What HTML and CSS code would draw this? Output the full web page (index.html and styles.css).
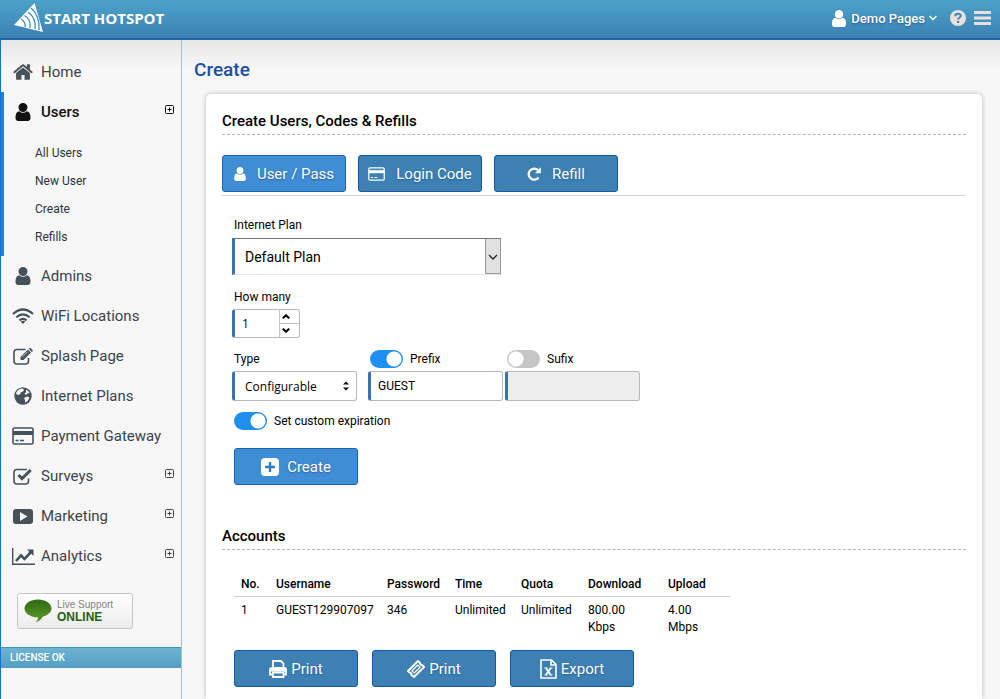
FILE: index.html
```html
<!DOCTYPE html>
<html lang="en">
<head>
    <meta charset="UTF-8">
    <meta name="viewport" content="width=device-width, initial-scale=1">
    <title>Start Hotspot - Create</title>
    <link rel="stylesheet" href="styles.css">
</head>
<body>

<!-- shared icons -->
<svg class="sprite" aria-hidden="true">
    <symbol id="i-user" viewBox="256 128 1280 1536"><path d="M1536 1399q0 109-62.500 187t-150.500 78h-854q-88 0-150.500-78t-62.500-187q0-85 8.500-160.500t31.500-152 58.500-131 94-89 134.500-34.500q131 128 313 128t313-128q76 0 134.500 34.500t94 89 58.500 131 31.500 152 8.500 160.500zm-256-887q0 159-112.500 271.500t-271.500 112.500-271.500-112.500-112.500-271.500 112.500-271.500 271.500-112.500 271.500 112.500 112.500 271.500z"/></symbol>
    <symbol id="i-plus" viewBox="0 0 9 9"><rect x=".5" y=".5" width="8" height="8" rx="1" fill="none" stroke="currentColor"/><path d="M2.500 4.500h4M4.500 2.500v4" stroke="currentColor"/></symbol>
    <symbol id="i-card" viewBox="0 0 22 18"><rect x="1" y="1" width="20" height="16" rx="1.500" fill="none" stroke="currentColor" stroke-width="1.600"/><path d="M1 4h20v4H1z"/><path d="M3.500 13.500h3M8 13.500h4" stroke="currentColor" stroke-width="1.500"/></symbol>
</svg>

<header class="topbar">
    <a class="logo" href="#">
        <svg width="30" height="30" viewBox="0 0 30 30">
            <path d="M20.500 0 29 29 0 22z" fill="#fff"/>
            <g fill="none" stroke="#3e8dbd" stroke-width="1.300">
                <path d="M7 16q5 3 4 8M10.500 12.500q7 4 5.500 12.500M14 9q8.500 6 7 17M17 5q9 8 8 22"/>
            </g>
        </svg>
        <span>START HOTSPOT</span>
    </a>
    <div class="top-right">
        <button class="account" type="button">
            <svg width="16" height="17" fill="currentColor"><use href="#i-user"/></svg>
            Demo Pages
            <svg width="8" height="6" viewBox="0 0 8 6" fill="none" stroke="currentColor" stroke-width="1.500"><path d="M.5 1 4 4.500 7.500 1"/></svg>
        </button>
        <button class="icon-btn" type="button" aria-label="Help">
            <svg width="16" height="16" viewBox="0 0 16 16"><circle cx="8" cy="8" r="8" fill="#e9dfdd"/><path d="M5.300 6.200C5.400 2.800 10.800 3 10.700 6c0 1.800-2.600 1.800-2.600 3.600" fill="none" stroke="#3d87b8" stroke-width="2"/><rect x="7" y="10.800" width="2.200" height="2.200" fill="#3d87b8"/></svg>
        </button>
        <button class="icon-btn" type="button" aria-label="Menu">
            <svg width="17" height="14" viewBox="0 0 17 14" fill="#e9dfdd"><path d="M0 0h17v3H0zM0 5.500h17v3H0zM0 11h17v3H0z"/></svg>
        </button>
    </div>
</header>

<div class="layout">
    <aside class="sidebar">
        <nav>
            <a class="item" href="#">
                <svg class="ico" width="20" height="20" viewBox="64 128 1664 1536"><path d="M1472 992v480q0 26-19 45t-45 19h-384v-384h-256v384h-384q-26 0-45-19t-19-45v-480q0-1 .5-3t.5-3l575-474 575 474q1 2 1 6zm223-69l-62 74q-8 9-21 11h-3q-13 0-21-7l-692-577-692 577q-12 8-24 7-13-2-21-11l-62-74q-8-10-7-23.500t11-21.500l719-599q32-26 76-26t76 26l244 204v-195q0-14 9-23t23-9h192q14 0 23 9t9 23v408l219 182q10 8 11 21.500t-7 23.500z"/></svg>
                <span>Home</span>
            </a>
            <div class="group">
                <a class="item active" href="#">
                    <svg class="ico" width="18" height="18"><use href="#i-user"/></svg>
                    <span>Users</span>
                    <svg class="expand" width="9" height="9"><use href="#i-plus"/></svg>
                </a>
                <div class="sub">
                    <a href="#">All Users</a>
                    <a href="#">New User</a>
                    <a href="#">Create</a>
                    <a href="#">Refills</a>
                </div>
            </div>
            <a class="item" href="#">
                <svg class="ico" width="18" height="18"><use href="#i-user"/></svg>
                <span>Admins</span>
            </a>
            <a class="item" href="#">
                <svg class="ico" width="22" height="16" viewBox="0 0 22 16"><g fill="none" stroke="currentColor" stroke-width="2.200"><path d="M1 6q10-9 20 0M4.300 9.300q6.700-6 13.400 0M7.500 12.300q3.500-3 7 0"/></g><path d="m11 16-2.200-2.300q2.200-1.700 4.400 0z"/></svg>
                <span>WiFi Locations</span>
            </a>
            <a class="item" href="#">
                <svg class="ico" width="20" height="17" viewBox="0 0 20 17"><path d="M12.500 1.500H4Q1 1.500 1 4.500v8.500q0 3 3 3h8.500q3 0 3-3v-3" fill="none" stroke="currentColor" stroke-width="1.600"/><path d="m7.500 9 7.500-7.500 3 3L10.500 12H7.500z"/><path d="m15.700.8.6-.6q.7-.5 1.400 0l1.800 1.800q.5.700 0 1.400l-.7.6z"/><path d="m9.500 8.800 5-5" stroke="#f7f7f7" stroke-width=".7"/></svg>
                <span>Splash Page</span>
            </a>
            <a class="item" href="#">
                <svg class="ico" width="18" height="18" viewBox="0 0 18 18"><circle cx="9" cy="9" r="8.700"/><path d="M6 1.700 9 1.500 10 3.500 8 5 6.500 5.500 6.500 7 4.500 8 3 7.500 1.800 6.500Q3 3.500 6 1.700zM12 2.500q2.500 1 3.800 3.500l-2.300.5L12 8l-1.500-1.300L12 5zM10 11l3-1.500 2.500 1q-1 3.500-4.500 5.300l.2-2z" fill="#f7f7f7"/></svg>
                <span>Internet Plans</span>
            </a>
            <a class="item" href="#">
                <svg class="ico" width="22" height="18"><use href="#i-card"/></svg>
                <span>Payment Gateway</span>
            </a>
            <a class="item" href="#">
                <svg class="ico" width="20" height="17" viewBox="0 0 20 17"><path d="M14 1.500H4Q1 1.500 1 4.500v8.500q0 3 3 3h8.500q3 0 3-3v-2.500" fill="none" stroke="currentColor" stroke-width="1.600"/><path d="m5.500 7 3.500 3.600L17.700 2" fill="none" stroke="currentColor" stroke-width="3"/></svg>
                <span>Surveys</span>
                <svg class="expand" width="9" height="9"><use href="#i-plus"/></svg>
            </a>
            <a class="item" href="#">
                <svg class="ico" width="20" height="15" viewBox="0 0 20 15"><rect width="20" height="15" rx="3"/><path d="m7 3 7.500 4.500L7 12z" fill="#f7f7f7"/></svg>
                <span>Marketing</span>
                <svg class="expand" width="9" height="9"><use href="#i-plus"/></svg>
            </a>
            <a class="item" href="#">
                <svg class="ico" width="23" height="17" viewBox="0 0 23 17"><path d="M.7 0v16.300H23" fill="none" stroke="currentColor" stroke-width="1.400"/><path d="m4 13 5-5.500 3.500 3.500 6.500-7" fill="none" stroke="currentColor" stroke-width="2.600"/><path d="M15 1.500h6.500V8z"/></svg>
                <span>Analytics</span>
                <svg class="expand" width="9" height="9"><use href="#i-plus"/></svg>
            </a>
        </nav>

        <a class="support" href="#">
            <svg width="28" height="24" viewBox="0 0 28 24"><defs><linearGradient id="bubble" x1="0" y1="0" x2="0" y2="1"><stop offset="0" stop-color="#2f6b12"/><stop offset="1" stop-color="#5f9a2c"/></linearGradient></defs><path d="M14 .5C6.500.5.500 4.400.500 9.500S6.500 18.300 14 18.300q.3 3-2.500 5.200 5-1.500 7.500-5.900c5-1.500 8.500-4.400 8.500-8.100C27.500 4.400 21.500.5 14 .5z" fill="url(#bubble)"/></svg>
            <span>Live Support<strong>ONLINE</strong></span>
        </a>

        <div class="license">LICENSE OK</div>
    </aside>

    <main>
        <h1>Create</h1>

        <section class="card">
            <h2>Create Users, Codes &amp; Refills</h2>

            <div class="tabs">
                <button class="btn light" type="button">
                    <svg width="12" height="14" fill="currentColor"><use href="#i-user"/></svg>
                    User / Pass
                </button>
                <button class="btn" type="button">
                    <svg width="17" height="14" fill="currentColor"><use href="#i-card"/></svg>
                    Login Code
                </button>
                <button class="btn" type="button">
                    <svg width="14" height="14" viewBox="0 0 14 14"><path d="M11.600 10.500A5.500 5.500 0 1 1 11 3.200" fill="none" stroke="currentColor" stroke-width="2.300"/><path d="M13.800.3v5.900H8z" fill="currentColor"/></svg>
                    Refill
                </button>
            </div>

            <form class="create-form" onsubmit="return false">
                <div class="field">
                    <label for="plan">Internet Plan</label>
                    <select id="plan" class="plan">
                        <option>Default Plan</option>
                    </select>
                </div>

                <div class="field">
                    <label for="howMany">How many</label>
                    <div class="spinner">
                        <input type="number" id="howMany" value="1" min="1">
                        <div class="steps">
                            <button type="button" aria-label="More" onclick="howMany.stepUp()"><svg width="8" height="5" viewBox="0 0 8 5"><path d="M.8 4.300 4 1.300l3.200 3" fill="none" stroke="#000" stroke-width="2"/></svg></button>
                            <button type="button" aria-label="Less" onclick="howMany.stepDown()"><svg width="8" height="5" viewBox="0 0 8 5"><path d="M.8.7 4 3.700l3.200-3" fill="none" stroke="#000" stroke-width="2"/></svg></button>
                        </div>
                    </div>
                </div>

                <div class="type-row">
                    <div class="field">
                        <label for="type">Type</label>
                        <select id="type" class="type">
                            <option>Configurable</option>
                        </select>
                    </div>
                    <div class="field">
                        <label class="toggle"><input type="checkbox" checked>Prefix</label>
                        <input class="text" type="text" value="GUEST" aria-label="Prefix text">
                    </div>
                    <div class="field">
                        <label class="toggle"><input type="checkbox">Sufix</label>
                        <input class="text" type="text" disabled aria-label="Sufix text">
                    </div>
                </div>

                <label class="toggle expiration"><input type="checkbox" checked>Set custom expiration</label>

                <button class="btn light create" type="submit">
                    <svg width="18" height="18" viewBox="0 0 18 18"><rect width="18" height="18" rx="4" fill="#fff"/><path d="M9 4v10M4 9h10" stroke="#2f7cc4" stroke-width="2.400"/></svg>
                    Create
                </button>
            </form>

            <h2>Accounts</h2>

            <table class="accounts">
                <thead>
                    <tr>
                        <th>No.</th>
                        <th>Username</th>
                        <th>Password</th>
                        <th>Time</th>
                        <th>Quota</th>
                        <th>Download</th>
                        <th>Upload</th>
                    </tr>
                </thead>
                <tbody>
                    <tr>
                        <td>1</td>
                        <td>GUEST129907097</td>
                        <td>346</td>
                        <td>Unlimited</td>
                        <td>Unlimited</td>
                        <td>800.00<br>Kbps</td>
                        <td>4.00<br>Mbps</td>
                    </tr>
                </tbody>
            </table>

            <div class="actions">
                <button class="btn" type="button">
                    <svg width="18" height="18" viewBox="0 0 18 18" fill="none" stroke="currentColor" stroke-width="1.800"><path d="M4 9V1h8l2.500 2.500V9M4 12.500h10.500V17H4z"/><path d="M3.500 14.500H1V10q0-2 2-2h12.500Q17 8 17 10v4.500h-2.500"/><path d="M1.500 10.300h15" stroke-width="2.500"/></svg>
                    Print
                </button>
                <button class="btn" type="button">
                    <svg width="18" height="18" viewBox="0 0 18 18" fill="none" stroke="currentColor" stroke-width="2"><path d="M11 1 1 11l1.500 1.500q2 0 2 2.500L7 17 17 7l-2-2q-2 0-2-2z"/><path d="m10.800 5-5.800 5.800 2.200 2.200L13 7.200z" stroke-width="1.200"/></svg>
                    Print
                </button>
                <button class="btn" type="button">
                    <svg width="17" height="20" viewBox="0 0 17 20" fill="none" stroke="currentColor" stroke-width="1.600"><path d="M1 1h10.500L16 5.500V19H1zM11 1v5h5"/><path d="m5.800 9 5 7M10.800 9l-5 7" stroke-width="1.800"/><path d="M4.500 9h3M9.500 9h3M4.500 16h3M9.500 16h3" stroke-width="1.200"/></svg>
                    Export
                </button>
            </div>
        </section>
    </main>
</div>

</body>
</html>
```
FILE: styles.css
```css
* {
    box-sizing: border-box;
}
body {
    margin: 0;
    min-height: 100vh;
    display: flex;
    flex-direction: column;
    font-family: Roboto, sans-serif;
    font-size: 12px;
    color: #000;
    background-color: #f7f7f7;
}
a {
    text-decoration: none;
    color: inherit;
}
button, input, select {
    font-family: inherit;
    color: inherit;
}
.sprite {
    display: none;
}

/* top bar */
.topbar {
    display: flex;
    justify-content: space-between;
    align-items: center;
    height: 40px;
    padding: 0 9px 2px 14px;
    color: #fff;
    background: linear-gradient(#4ca2c9, #3c80b4);
    border-bottom: 2px solid #1f67a0;
}
.logo {
    display: flex;
    align-items: center;
    font-family: "Open Sans", sans-serif;
    font-size: 15px;
    font-weight: bold;
}
.top-right {
    display: flex;
    align-items: center;
    gap: 8px;
}
.top-right button {
    display: flex;
    align-items: center;
    padding: 0;
    border: 0;
    background: none;
}
.top-right .account {
    gap: 4px;
    margin-right: 5px;
    font-size: 13px;
    font-weight: 500;
    text-shadow: 0 1px 2px #1d5c93;
}

/* sidebar */
.layout {
    flex: 1;
    display: flex;
    background: linear-gradient(#e6e6e6, #f7f7f7 28px);
}
.sidebar {
    width: 182px;
    flex-shrink: 0;
    padding-top: 12px;
    border-left: 1px solid #0f78d6;
    border-right: 1px solid #a9bfc9;
}
.item {
    display: grid;
    grid-template-columns: 24px 1fr 9px;
    column-gap: 6px;
    align-items: center;
    height: 40px;
    padding: 0 7px 0 10px;
    font-size: 15px;
    color: #3a444c;
    white-space: nowrap;
}
.ico {
    justify-self: center;
    fill: currentColor;
}
.item:not(.active) .ico {
    color: #46515a;
}
.expand {
    margin-bottom: 5px;
}
.group {
    border-left: 3px solid #2f7cc8;
}
.group .item {
    padding-left: 7px;
}
.active {
    font-weight: 500;
    color: #111;
}
.sub {
    padding: 7px 0 5px 31px;
}
.sub a {
    display: block;
    line-height: 28px;
    color: #2b333a;
}
.support {
    display: flex;
    align-items: center;
    gap: 5px;
    width: 116px;
    height: 36px;
    margin: 17px 0 18px 16px;
    padding-left: 6px;
    font-family: "Liberation Sans", Arial, sans-serif;
    font-size: 10px;
    line-height: 12px;
    color: #808588;
    background: linear-gradient(#fff, #ececee);
    border: 1px solid #c6c6c8;
    border-radius: 3px;
}
.support strong {
    display: block;
    font-size: 12px;
    color: #24620f;
}
.license {
    padding-left: 9px;
    font-size: 10px;
    font-weight: 500;
    line-height: 20px;
    color: #fff;
    background: linear-gradient(#6db3d2, #559dc4);
    border-top: 1px solid #3e95bf;
}

/* content */
main {
    flex: 1;
    display: flex;
    flex-direction: column;
    padding: 18px 18px 0 12px;
}
h1 {
    margin: 0 0 12px;
    font-size: 19px;
    font-weight: 500;
    line-height: 24px;
    color: #1c4fa0;
}
.card {
    flex: 1;
    margin-left: 12px;
    padding: 17px 16px 12px;
    background-color: #fff;
    border-radius: 5px 5px 0 0;
    box-shadow: 0 0 5px rgba(0,0,0,0.25);
}
h2 {
    margin: 0;
    padding-bottom: 2px;
    font-size: 15px;
    font-weight: 500;
    line-height: 21px;
    border-bottom: 1px dashed #b5b5b5;
}
.btn {
    display: flex;
    align-items: center;
    justify-content: center;
    width: 124px;
    height: 37px;
    padding: 0;
    font-size: 15px;
    color: #fff;
    white-space: nowrap;
    text-shadow: 0 1px 2px #24609a;
    background-color: #3d80b4;
    border: 1px solid #17599c;
    border-radius: 3px;
}
.btn.light {
    background-color: #3f8dd4;
    border-color: #1764b4;
}
.tabs {
    display: flex;
    gap: 12px;
    margin-top: 20px;
    padding-bottom: 3px;
    border-bottom: 1px solid #d4d4d4;
}
.tabs .btn {
    gap: 11px;
}

/* form */
.create-form {
    padding: 21px 0 41px 10px;
}
.field {
    display: flex;
    flex-direction: column;
    align-items: flex-start;
}
.field label {
    padding-left: 2px;
    line-height: 16px;
}
select {
    appearance: none;
}
.plan {
    width: 269px;
    height: 37px;
    margin: 5px 0 14px;
    padding: 0 24px 0 10px;
    font-size: 14px;
    border: 1px solid #e6e6e6;
    border-top-color: #777;
    border-left: 3px solid #3674b5;
    border-right-color: #999;
    background: #fff url("data:image/svg+xml,%3Csvg xmlns='http://www.w3.org/2000/svg' width='15' height='35'%3E%3Cpath d='M0 0h15v35H0z' fill='%23e1e1e1'/%3E%3Cpath d='M.5 0v34.500H15' fill='none' stroke='%23999'/%3E%3Cpath d='m4 16 4 4 4-4' fill='none' stroke='%23222' stroke-width='1.300'/%3E%3C/svg%3E") right / 15px 100% no-repeat;
}
.spinner {
    display: flex;
    width: 68px;
    height: 29px;
    margin: 4px 0 12px;
    border: 1px solid #b8b8b8;
    border-left: 3px solid #3674b5;
    border-radius: 3px;
}
.spinner input {
    flex: 1;
    min-width: 0;
    padding: 0 0 0 7px;
    font-family: "Open Sans", sans-serif;
    font-size: 12px;
    border: 0;
    background: none;
    appearance: textfield;
}
.steps {
    display: flex;
    flex-direction: column;
    width: 20px;
    border-left: 1px solid #c4c4c4;
}
.steps button {
    flex: 1;
    display: flex;
    align-items: center;
    padding: 0 2px;
    border: 0;
    background: none;
}
.steps button + button {
    border-top: 1px solid #c4c4c4;
}
.type-row {
    display: flex;
    gap: 11px;
}
.type-row .field + .field + .field {
    margin-left: -9px;
}
.type-row .field label {
    height: 18px;
    line-height: 18px;
    margin-bottom: 3px;
}
.type, .text {
    height: 30px;
    border: 1px solid #b8b8b8;
    border-left: 3px solid #3674b5;
    border-radius: 3px;
}
.type {
    width: 125px;
    padding: 0 20px 0 10px;
    font-family: "Open Sans", sans-serif;
    font-size: 12px;
    background: #fff url("data:image/svg+xml,%3Csvg xmlns='http://www.w3.org/2000/svg' width='6' height='10'%3E%3Cpath d='M0 3.500 3 .5l3 3zM0 6.500l3 3 3-3z'/%3E%3C/svg%3E") right 7px center no-repeat;
}
.text {
    width: 135px;
    padding: 0 7px;
    font-size: 12px;
    background-color: #fff;
}
.text:disabled {
    background-color: #ededed;
}
.toggle {
    display: flex;
    align-items: center;
    gap: 7px;
}
.toggle input {
    appearance: none;
    width: 33px;
    height: 18px;
    margin: 0;
    border-radius: 9px;
    background: #c6c6c6 radial-gradient(circle at 9px 9px, #fff 7px, transparent 8px);
}
.toggle input:checked {
    background: #2090f0 radial-gradient(circle at 24px 9px, #fff 7px, transparent 8px);
}
.expiration {
    margin: 11px 0 18px 2px;
}
.create {
    margin-left: 2px;
    gap: 8px;
}

/* accounts */
.accounts {
    width: 496px;
    margin: 24px 0 14px 12px;
    border-collapse: collapse;
    table-layout: fixed;
    text-align: left;
    line-height: 17px;
}
.accounts th {
    padding: 2px 0 3px 7px;
    font-weight: 500;
    border-bottom: 1px solid #cfcfcf;
}
.accounts td {
    padding: 5px 0 0 7px;
    vertical-align: top;
}
.accounts th:nth-child(1) { width: 35px; }
.accounts th:nth-child(2) { width: 111px; }
.accounts th:nth-child(3) { width: 68px; }
.accounts th:nth-child(4) { width: 66px; }
.accounts th:nth-child(5) { width: 67px; }
.accounts th:nth-child(6) { width: 80px; }
.actions {
    display: flex;
    gap: 14px;
    padding-left: 12px;
}
.actions .btn {
    gap: 4px;
}
```
